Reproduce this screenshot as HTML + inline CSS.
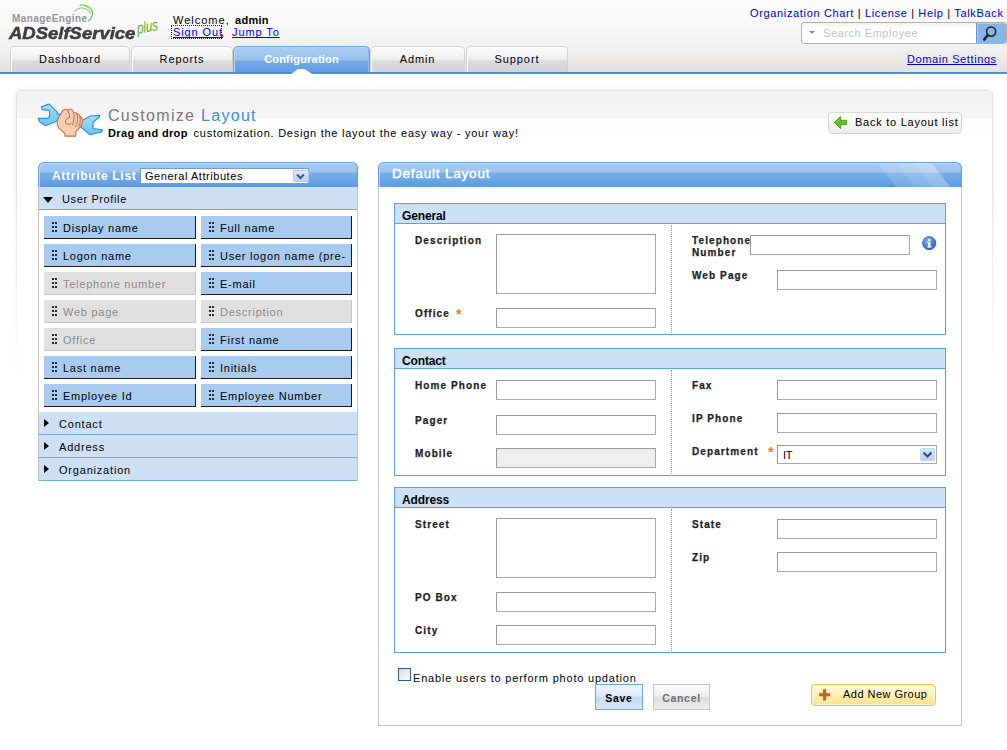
<!DOCTYPE html>
<html><head><meta charset="utf-8">
<style>
*{box-sizing:border-box;margin:0;padding:0}
html,body{width:1007px;height:750px;overflow:hidden;background:#fff}
body{position:relative;font-family:"Liberation Sans",sans-serif;font-size:11px;color:#000}
.a{position:absolute;white-space:nowrap;line-height:1}
#hdr{position:absolute;left:0;top:0;width:1007px;height:72px;background:linear-gradient(#fbfbfb 0%,#f8f8f8 35%,#f0efef 70%,#e4e2e1 100%)}
#bl{position:absolute;left:0;top:72px;width:1007px;height:2px;background:#4590da}
.tab{position:absolute;top:46px;height:26px;border:1px solid #d2d2d2;border-bottom:none;border-radius:5px 5px 0 0;background:linear-gradient(#fbfbfb 0%,#efefef 48%,#dbdbdb 58%,#d3d3d3 100%);box-shadow:inset 1px 1px 0 #fff;text-align:center;font-size:11px;letter-spacing:0.9px;padding-top:6px;color:#000}
.tab.on{background:linear-gradient(#a9cdf2 0%,#98c1ed 52%,#74aae6 56%,#5e9ce1 100%);box-shadow:inset 1px 1px 0 #b8d6f5,inset -1px 0 0 #8fbcec;border-color:#6aa3e2;color:#fff;font-weight:bold;letter-spacing:0.2px}
a{color:#0000ee}
.a{text-decoration-skip-ink:none}
.ph{position:absolute;height:25px;border:1px solid #5f9de0;border-bottom:none;border-radius:6px 6px 0 0;background:linear-gradient(#a6cbf0 0px,#9cc4ee 9px,#78afe8 10px,#5c9be0 24px);box-shadow:inset 1px 1px 0 #c2dcf6}
.it{position:absolute;width:152px;height:23px;background:#a9cbef;border-right:1px solid #1a1a1a;border-bottom:1px solid #1a1a1a;font-size:11px;letter-spacing:0.75px;padding:7px 0 0 19px;line-height:1;color:#000}
.it.g{background:#e0e0e0;border-color:#c6c6c6;color:#8a8a8a}
.it i{position:absolute;left:8px;top:6px;width:5px;height:10px;background:radial-gradient(circle at 1px 1px,#2a2a2a 1px,transparent 1.1px) 0 0/3px 4px}
.rw{position:absolute;left:39px;width:318px;height:23px;background:#cde0f5;border-bottom:1px solid #6fa8e6;font-size:11px;letter-spacing:0.8px;line-height:1;padding:7px 0 0 21px}
.tri{position:absolute;width:0;height:0}
.sec{position:absolute;left:394px;width:552px;border:1px solid #5e9fe0;background:#fff}
.sh{position:absolute;left:0;top:0;width:550px;height:20px;background:#cde1f6;border-bottom:1px solid #5e9fe0;font-size:12px;font-weight:bold;padding:6px 0 0 7px;line-height:1;letter-spacing:-0.15px}
.dv{position:absolute;left:276px;width:0;border-left:1px dotted #9a9a9a}
.lb{position:absolute;white-space:nowrap;line-height:1;font-size:10px;font-weight:bold;color:#1e1e1e;letter-spacing:1.1px;-webkit-text-stroke:0.25px #1e1e1e}
.in{position:absolute;width:160px;height:20px;border:1px solid #a9a9a9;border-top-color:#9a9a9a;border-left-color:#9a9a9a;background:#fff}
.ast{position:absolute;color:#d9861f;font-size:14px;font-weight:bold;line-height:1}


</style></head><body>
<div id="hdr"></div>
<div id="bl"></div>

<!-- logo -->
<div class="a" style="left:12px;top:14px;font-size:10px;color:#959595;letter-spacing:0.4px;font-weight:bold">ManageEngine</div>
<svg class="a" style="left:70px;top:2px" width="28" height="24" viewBox="0 0 28 24"><path d="M4.5 9.5 Q10 3.5 17 7.5 Q20 9.5 20.4 12" fill="none" stroke="#66c244" stroke-width="0.9"/><path d="M9.5 3.2 Q17 2 21.5 7.5 Q25 13 18 19.4" fill="none" stroke="#5cbc3c" stroke-width="1.05"/><path d="M14 3.5 Q19 5 21 10" fill="none" stroke="#9ad87c" stroke-width="0.7"/></svg>
<div class="a" style="left:9px;top:25px;font-size:16.5px;font-weight:bold;font-style:italic;color:#3e3e3e;letter-spacing:0px;transform:scaleX(1.12);transform-origin:0 0;-webkit-text-stroke:0.5px #3e3e3e">ADSelfService</div>
<div class="a" style="left:137px;top:21px;font-size:16px;font-style:italic;color:#5cb82e;letter-spacing:-0.3px;transform:scaleX(0.74) rotate(-8deg);transform-origin:0 50%">plus</div>

<div class="a" style="left:173px;top:15px;font-size:11px;letter-spacing:1px">Welcome,</div>
<div class="a" style="left:235px;top:15px;font-size:11px;font-weight:bold;letter-spacing:0.3px">admin</div>
<div class="a" style="left:173px;top:27px;font-size:11px;letter-spacing:0.9px;color:#0000ee;text-decoration:underline">Sign Out</div>
<div class="a" style="left:221px;top:27px;font-size:11px">,</div>
<div class="a" style="left:232px;top:27px;font-size:11px;letter-spacing:0.9px;color:#0000ee;text-decoration:underline">Jump To</div>

<div class="tab" style="left:10px;width:120px">Dashboard</div>
<div class="tab" style="left:131px;width:102px">Reports</div>
<div class="tab on" style="left:233px;width:137px">Configuration</div>
<div class="tab" style="left:370px;width:95px">Admin</div>
<div class="tab" style="left:466px;width:102px">Support</div>
<svg class="a" style="left:288px;top:68px" width="28" height="7" viewBox="0 0 28 7"><path d="M2.5 6.5 L10 1 L16.5 1 L25 6.5 L25 7 L2.5 7 Z" fill="#fff"/></svg>
<div class="a" style="left:171px;top:25px;width:51px;height:14px;border:1px dotted #1a1a8a"></div>

<div class="a" style="left:750px;top:8px;font-size:11px;letter-spacing:0.65px;color:#0000cc">Organization Chart <span style="color:#000">|</span> License <span style="color:#000">|</span> Help <span style="color:#000">|</span> TalkBack</div>

<div class="a" style="left:801px;top:22px;width:206px;height:22px;border:1px solid #b0b0b0;border-radius:3px;background:linear-gradient(#f2f2f2,#fff 6px);overflow:hidden">
  <div class="a" style="left:174px;top:0;width:31px;height:20px;background:#87b5e6;border-left:1px solid #5f97d6;box-shadow:inset 1px 1px 0 #a9cdf2"></div>
</div>
<svg class="a" style="left:980px;top:24px" width="20" height="19" viewBox="0 0 20 19"><circle cx="11.1" cy="7.6" r="4.6" fill="none" stroke="#242424" stroke-width="1.6"/><path d="M7.8 11 L4.2 15.6" stroke="#242424" stroke-width="2.6" stroke-linecap="round"/></svg>
<svg class="a" style="left:808px;top:30px" width="8" height="5" viewBox="0 0 8 5"><path d="M1 1 L7 1 L4 4 Z" fill="#888"/></svg>
<div class="a" style="left:823px;top:28px;font-size:11px;letter-spacing:0.55px;color:#c4c4c4">Search Employee</div>

<div class="a" style="left:907px;top:54px;font-size:11px;letter-spacing:0.6px;color:#0000cc;text-decoration:underline">Domain Settings</div>

<!-- content panel -->
<div class="a" style="left:8px;top:82px;width:993px;height:668px;-webkit-mask-image:linear-gradient(#000,#000 80px,transparent 300px)">
  <div class="a" style="left:8px;top:8px;width:977px;height:680px;border-radius:5px;border:1px solid #e0e0e0;box-shadow:0 0 4px 1px rgba(0,0,0,0.07)"></div>
</div>
<div class="a" style="left:17px;top:91px;width:975px;height:659px;border-radius:4px;background:linear-gradient(#f2f2f2 0px,#f5f5f5 27px,#fdfdfd 28px,#fff 60px)"></div>

<!-- wrench icon -->
<svg class="a" style="left:35px;top:100px" width="70" height="40" viewBox="0 0 70 40">
  <defs><linearGradient id="wg" x1="0" y1="0" x2="0" y2="1"><stop offset="0" stop-color="#a9def8"/><stop offset="1" stop-color="#6cc4ee"/></linearGradient></defs>
  <path d="M6.3 7 L12.9 4.2 L14.6 4.3 L22.2 12.2 L22.2 13.9 L26 14.6 L24 21 L22.9 20.8 L10.4 25.7 L4.2 21.5 L3.5 18.4 L12.2 18.4 L14.6 16.7 L14.6 11.1 L13.5 10.1 L7.6 9.7 Z" fill="url(#wg)" stroke="#2a93dd" stroke-width="1.2" stroke-linejoin="round"/>
  <path d="M46 21 L55.6 16 L64.6 15.3 L64.6 16.7 L58 22.2 L58 28.5 L67.4 29.9 L66.7 32 L54.9 34.7 L45.9 27.1 Z" fill="url(#wg)" stroke="#2a93dd" stroke-width="1.2" stroke-linejoin="round"/>
  <path d="M22.9 18.8 L27.4 11.1 Q28.5 9.2 30.6 9.2 Q32.2 9.4 32.7 10.4 Q33.5 8.8 35.3 9 Q37.5 9.5 38.6 12.2 Q40.5 12.4 41.7 13.2 Q44 14.5 44.8 15.8 Q47.8 18.5 47.6 21 Q47.2 24.5 44.5 27.8 L41 31.3 L40.7 36.1 L29.9 36.1 L29.9 33.4 L23.6 27.8 Q22 25 22.2 22.9 Z" fill="#f9cdb0" stroke="#bf7048" stroke-width="1.1" stroke-linejoin="round"/>
  <path d="M32.7 10.4 Q34.5 13.5 34.7 17.4 Q31.5 18 30.4 21 Q30.5 24.3 33 24.4 Q35 24.4 36.4 23.4 M38.6 12.2 Q39.6 16 38.9 19 Q38.5 22.5 37.4 25.2 M41.7 13.2 Q43 17 42.4 21 Q41.8 24.5 40.4 27.2 M44.8 15.8 Q45.6 19.5 45 23 Q44.4 25.5 43.4 27" fill="none" stroke="#bf7048" stroke-width="1"/>
</svg>

<div class="a" style="left:108px;top:108px;font-size:16px;color:#7a7a7a;letter-spacing:1.3px">Customize <span style="color:#3d8fd6">Layout</span></div>
<div class="a" style="left:108px;top:128px;font-size:11px;letter-spacing:0.75px"><b style="letter-spacing:0.35px;margin-right:2px">Drag and drop</b> customization. Design the layout the easy way - your way!</div>

<!-- back button -->
<div class="a" style="left:828px;top:112px;width:134px;height:22px;border:1px solid #d8d8d8;border-radius:4px;background:linear-gradient(#fcfcfc,#ececec)"></div>
<svg class="a" style="left:833px;top:116px" width="15" height="14" viewBox="0 0 15 14"><path d="M1.2 6.4 L7.6 0.6 L7.6 4.4 L13.6 4.4 L13.6 8.6 L7.6 8.6 L7.6 12.5 Z" fill="#62ba2e" stroke="#3e9a16" stroke-width="0.9" stroke-linejoin="round"/><path d="M4 6 L7 3.6 M9 5.6 L12 5.6" stroke="#9ad870" stroke-width="0.7"/></svg>
<div class="a" style="left:855px;top:117px;font-size:11px;letter-spacing:0.75px">Back to Layout list</div>

<!-- attribute list panel -->
<div class="a" style="left:38px;top:186px;width:320px;height:295px;border:1px solid #c4c4c4;border-top:none;background:#fff"></div>
<div class="ph" style="left:38px;top:162px;width:320px"></div>
<div class="a" style="left:52px;top:170px;font-size:12px;font-weight:bold;color:#fff;letter-spacing:0.7px">Attribute List</div>
<div class="a" style="left:140px;top:168px;width:169px;height:16px;background:#fff;border:1px solid #7a9cc4"></div>
<div class="a" style="left:145px;top:171px;font-size:11px;letter-spacing:0.55px">General Attributes</div>
<div class="a" style="left:293px;top:170px;width:16px;height:12px;border:1px solid #b4c8e8;border-radius:1px;background:linear-gradient(#dce8fa,#bcd0f2)"></div>
<svg class="a" style="left:296px;top:173px" width="9" height="7" viewBox="0 0 9 7"><path d="M1 1.5 L4.5 5 L8 1.5" fill="none" stroke="#3a5c8c" stroke-width="2"/></svg>

<div class="rw" style="top:187px;padding-left:23px;letter-spacing:0.62px">User Profile</div>
<div class="tri" style="left:43px;top:197px;border-left:5px solid transparent;border-right:5px solid transparent;border-top:6px solid #000"></div>

<div class="it" style="left:44px;top:216px"><i></i>Display name</div>
<div class="it" style="left:201px;top:216px;width:151px"><i></i>Full name</div>
<div class="it" style="left:44px;top:244px"><i></i>Logon name</div>
<div class="it" style="left:201px;top:244px;width:151px;overflow:hidden"><i></i>User logon name (pre-</div>
<div class="it g" style="left:44px;top:272px"><i></i>Telephone number</div>
<div class="it" style="left:201px;top:272px;width:151px"><i></i>E-mail</div>
<div class="it g" style="left:44px;top:300px"><i></i>Web page</div>
<div class="it g" style="left:201px;top:300px;width:151px"><i></i>Description</div>
<div class="it g" style="left:44px;top:328px"><i></i>Office</div>
<div class="it" style="left:201px;top:328px;width:151px"><i></i>First name</div>
<div class="it" style="left:44px;top:356px"><i></i>Last name</div>
<div class="it" style="left:201px;top:356px;width:151px"><i></i>Initials</div>
<div class="it" style="left:44px;top:384px"><i></i>Employee Id</div>
<div class="it" style="left:201px;top:384px;width:151px"><i></i>Employee Number</div>

<div class="rw" style="top:412px;padding-left:20px">Contact</div>
<div class="tri" style="left:44px;top:419px;border-top:4.5px solid transparent;border-bottom:4.5px solid transparent;border-left:5px solid #000"></div>
<div class="rw" style="top:435px;padding-left:20px">Address</div>
<div class="tri" style="left:44px;top:442px;border-top:4.5px solid transparent;border-bottom:4.5px solid transparent;border-left:5px solid #000"></div>
<div class="rw" style="top:458px;padding-left:20px">Organization</div>
<div class="tri" style="left:44px;top:465px;border-top:4.5px solid transparent;border-bottom:4.5px solid transparent;border-left:5px solid #000"></div>

<!-- default layout panel -->
<div class="a" style="left:378px;top:186px;width:584px;height:540px;border:1px solid #c4c4c4;border-top:none;background:#fff"></div>
<div class="ph" style="left:378px;top:162px;width:584px;overflow:hidden">
  <svg class="a" style="left:498px;top:-1px" width="80" height="26" viewBox="0 0 80 26"><path d="M0 0 L18 0 L38 26 L20 26 Z" fill="rgba(255,255,255,0.14)"/><path d="M18 0 L36 0 L56 26 L38 26 Z" fill="rgba(255,255,255,0.22)"/><path d="M36 0 L54 0 L74 26 L56 26 Z" fill="rgba(255,255,255,0.3)"/></svg>
</div>
<div class="a" style="left:392px;top:167px;font-size:13.5px;color:#fff;letter-spacing:0.8px;-webkit-text-stroke:0.45px #fff">Default Layout</div>

<div class="sec" style="top:203px;height:132px">
  <div class="sh">General</div>
  <div class="dv" style="top:21px;height:110px"></div>
</div>
<div class="lb" style="left:415px;top:236px">Description</div>
<div class="in" style="left:496px;top:234px;height:60px"></div>
<div class="lb" style="left:415px;top:309px">Office</div>
<div class="ast" style="left:456px;top:307px">*</div>
<div class="in" style="left:496px;top:308px"></div>
<div class="lb" style="left:692px;top:235px;line-height:12px">Telephone<br>Number</div>
<div class="in" style="left:750px;top:235px"></div>
<svg class="a" style="left:922px;top:236px" width="15" height="15" viewBox="0 0 15 15"><defs><radialGradient id="ig" cx="0.4" cy="0.3" r="0.8"><stop offset="0" stop-color="#7fb2ee"/><stop offset="1" stop-color="#1d58b8"/></radialGradient></defs><circle cx="7.2" cy="7.2" r="6.6" fill="url(#ig)" stroke="#2a5fae" stroke-width="0.8"/><rect x="6.2" y="6" width="2.2" height="5.3" fill="#fff"/><rect x="5.3" y="6" width="2" height="1.2" fill="#fff"/><rect x="5.3" y="10.3" width="4.2" height="1.2" fill="#fff"/><circle cx="7.3" cy="3.9" r="1.2" fill="#fff"/></svg>
<div class="lb" style="left:692px;top:271px">Web Page</div>
<div class="in" style="left:777px;top:270px"></div>

<div class="sec" style="top:348px;height:128px">
  <div class="sh">Contact</div>
  <div class="dv" style="top:21px;height:106px"></div>
</div>
<div class="lb" style="left:415px;top:381px">Home Phone</div>
<div class="in" style="left:496px;top:380px"></div>
<div class="lb" style="left:415px;top:416px">Pager</div>
<div class="in" style="left:496px;top:415px"></div>
<div class="lb" style="left:415px;top:449px">Mobile</div>
<div class="in" style="left:496px;top:448px;background:#efefef"></div>
<div class="lb" style="left:692px;top:381px">Fax</div>
<div class="in" style="left:777px;top:380px"></div>
<div class="lb" style="left:692px;top:414px">IP Phone</div>
<div class="in" style="left:777px;top:413px"></div>
<div class="lb" style="left:692px;top:447px">Department</div>
<div class="ast" style="left:768px;top:445px">*</div>
<div class="in" style="left:777px;top:445px;height:19px"></div>
<div class="a" style="left:783px;top:450px;font-size:11px;color:#000;letter-spacing:-0.2px">IT</div>
<div class="a" style="left:920px;top:448px;width:15px;height:13px;border:1px solid #c6d6f0;border-radius:1px;background:linear-gradient(#d6e3f8,#b9cff2)"></div>
<svg class="a" style="left:922px;top:451px" width="11" height="8" viewBox="0 0 11 8"><path d="M1.5 1.5 L5.5 5.5 L9.5 1.5" fill="none" stroke="#3a4a68" stroke-width="2.2"/></svg>

<div class="sec" style="top:487px;height:166px">
  <div class="sh">Address</div>
  <div class="dv" style="top:21px;height:144px"></div>
</div>
<div class="lb" style="left:415px;top:520px">Street</div>
<div class="in" style="left:496px;top:518px;height:60px"></div>
<div class="lb" style="left:415px;top:593px">PO Box</div>
<div class="in" style="left:496px;top:592px"></div>
<div class="lb" style="left:415px;top:626px">City</div>
<div class="in" style="left:496px;top:625px"></div>
<div class="lb" style="left:692px;top:520px">State</div>
<div class="in" style="left:777px;top:519px"></div>
<div class="lb" style="left:692px;top:553px">Zip</div>
<div class="in" style="left:777px;top:552px"></div>

<div class="a" style="left:398px;top:668px;width:13px;height:13px;border:1px solid #2c5d98;background:linear-gradient(135deg,#d8d8d2,#fdfdfd)"></div>
<div class="a" style="left:413px;top:673px;font-size:11px;letter-spacing:0.8px">Enable users to perform photo updation</div>

<div class="a" style="left:595px;top:684px;width:48px;height:26px;border:1px solid #6fa6e2;background:linear-gradient(#f0f6fd 0%,#dde9f8 45%,#c5dbf3 52%,#d6e6f8 100%);font-size:10.5px;font-weight:bold;text-align:center;padding-top:8px;line-height:1;letter-spacing:0.7px">Save</div>
<div class="a" style="left:653px;top:684px;width:57px;height:26px;border:1px solid #c6c6c6;background:linear-gradient(#fcfcfc 0%,#efefef 45%,#dedede 55%,#f0f0f0 100%);font-size:10.5px;font-weight:bold;color:#707070;text-align:center;padding-top:8px;line-height:1;letter-spacing:0.7px">Cancel</div>

<div class="a" style="left:811px;top:684px;width:125px;height:22px;border:1px solid #efbf45;border-radius:4px;background:linear-gradient(#fff9dc,#fff0b4 50%,#fde28a);box-shadow:inset 0 0 0 1px #fff6d0"></div>
<svg class="a" style="left:818px;top:688px" width="14" height="14" viewBox="0 0 14 14"><path d="M4.6 0.8 L8.6 0.8 L8.6 4.8 L12.8 4.8 L12.8 8.8 L8.6 8.8 L8.6 13 L4.6 13 L4.6 8.8 L0.6 8.8 L0.6 4.8 L4.6 4.8 Z" fill="#c4680e" stroke="#fff4d8" stroke-width="0.8"/></svg>
<div class="a" style="left:843px;top:689px;font-size:11px;letter-spacing:0.47px">Add New Group</div>

</body></html>
